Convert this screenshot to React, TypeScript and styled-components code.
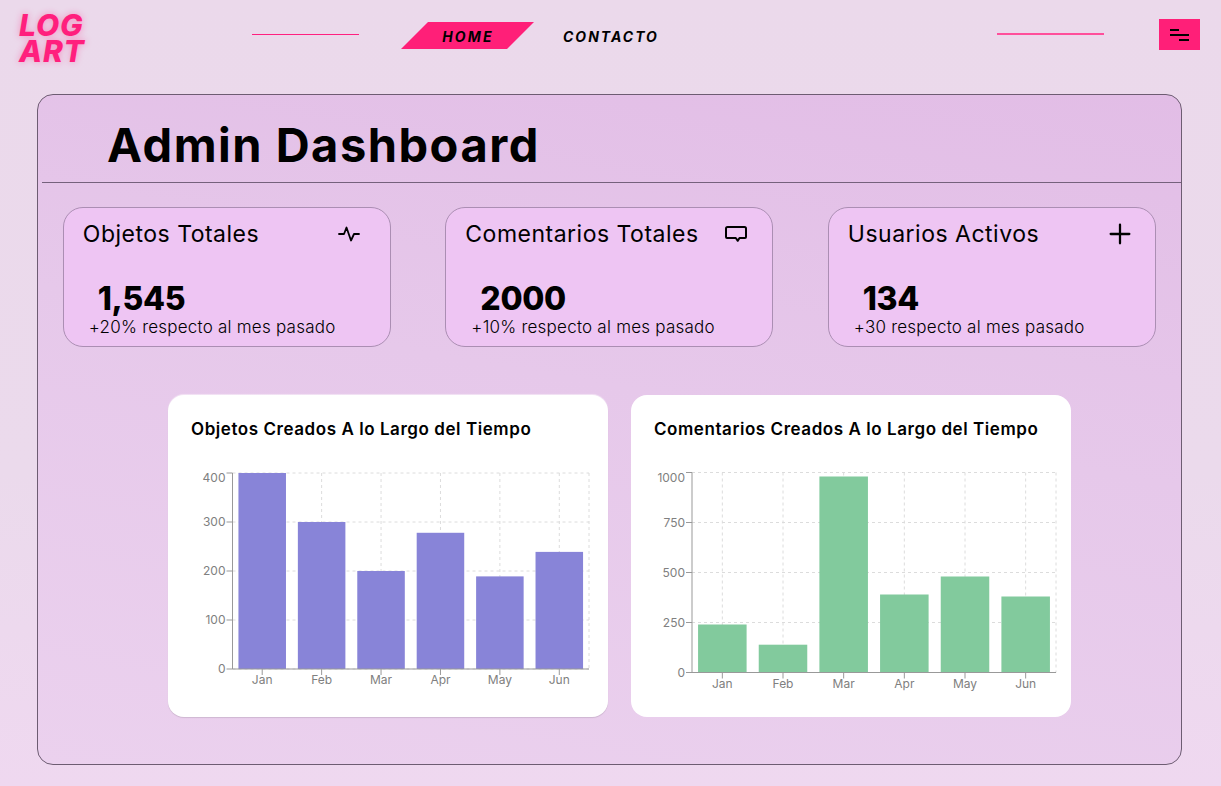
import React from 'react';
import styled, { createGlobalStyle } from 'styled-components';
import { Plus } from 'lucide-react';

const GlobalStyle = createGlobalStyle`
  html, body {
    margin: 0;
    padding: 0;
  }
  body {
    font-family: Inter, "Liberation Sans", sans-serif;
    background: #ebd9eb;
  }
`;

const Page = styled.div`
  width: 1221px;
  height: 786px;
  overflow: hidden;
  background: linear-gradient(180deg, #ebd9eb 0%, #ebdaec 60%, #efd8f0 100%);
`;

const Header = styled.header`
  display: flex;
  align-items: flex-start;
  height: 94px;
  padding-left: 19px;
  box-sizing: border-box;
`;

const Logo = styled.div`
  width: 233px;
  margin-top: 12px;
  font-size: 30px;
  line-height: 26px;
  font-weight: 800;
  font-style: italic;
  letter-spacing: 0.8px;
  color: #ff1f7d;
  text-shadow: 0 0 7px rgba(255, 31, 125, 0.4);
`;

const NavLine = styled.div<{ $width: number; $top: number; $left?: number; $thick?: boolean }>`
  width: ${(p) => p.$width}px;
  height: ${(p) => (p.$thick ? 2 : 1)}px;
  margin-top: ${(p) => p.$top}px;
  margin-left: ${(p) => p.$left ?? 0}px;
  background: ${(p) => (p.$thick ? '#ff4f9b' : '#ff2080')};
`;

const HomeLink = styled.a`
  width: 133px;
  height: 27px;
  margin: 22px 0 0 42px;
  padding: 1px 0 0 1px;
  box-sizing: border-box;
  display: flex;
  align-items: center;
  justify-content: center;
  clip-path: polygon(27px 0, 100% 0, 106px 100%, 0 100%);
  background: #ff1f78;
  color: #000;
  font-size: 14px;
  font-weight: 700;
  font-style: italic;
  letter-spacing: 2.2px;
`;

const ContactLink = styled.a`
  margin: 28px 0 0 29px;
  color: #000;
  font-size: 14px;
  line-height: 17px;
  font-weight: 700;
  font-style: italic;
  letter-spacing: 2px;
`;

const MenuButton = styled.button`
  width: 41px;
  height: 31px;
  margin: 19px 0 0 55px;
  padding: 0;
  border: 0;
  background: #ff1f78;
  display: flex;
  align-items: center;
  justify-content: center;
`;

const Panel = styled.main`
  width: 1145px;
  height: 671px;
  margin-left: 37px;
  box-sizing: border-box;
  border: 1px solid #6d5c72;
  border-radius: 16px;
  background: linear-gradient(190deg, #e2bde6 0%, #e6c8ea 45%, #ebd1ee 100%);
`;

const TitleBar = styled.div`
  height: 88px;
  margin-left: 4px;
  box-sizing: border-box;
  border-bottom: 1px solid #75617c;
  padding: 22px 0 0 65px;
`;

const Title = styled.h1`
  margin: 0;
  font-size: 47px;
  line-height: 56px;
  font-weight: 700;
  letter-spacing: 1.5px;
  color: #000;
`;

const StatsRow = styled.section`
  display: flex;
  gap: 54.5px;
  padding: 24px 0 0 24.8px;
`;

const StatCard = styled.article`
  width: 328px;
  height: 140px;
  box-sizing: border-box;
  border: 1px solid #ab8eb3;
  border-radius: 20px;
  background: #eec5f3;
  padding: 11px 19px 0 19px;
  color: #000;
`;

const StatTop = styled.div`
  display: flex;
  align-items: center;
  justify-content: space-between;
  height: 30px;
`;

const StatLabel = styled.h2`
  margin: 0;
  font-size: 23px;
  line-height: 30px;
  font-weight: 400;
  letter-spacing: 0.5px;
`;

const StatIcon = styled.span<{ $right: number }>`
  display: flex;
  align-items: center;
  justify-content: center;
  width: 22px;
  height: 22px;
  margin-right: ${(p) => p.$right}px;

  svg {
    flex-shrink: 0;
  }
`;

const StatValue = styled.div`
  margin: 31px 0 0 15px;
  font-size: 32px;
  line-height: 38px;
  font-weight: 800;
  letter-spacing: -0.3px;
`;

const StatNote = styled.div`
  margin: -1px 0 0 6px;
  font-size: 17px;
  line-height: 20px;
  font-weight: 300;
  letter-spacing: 0.23px;
`;

const ChartsRow = styled.section`
  display: flex;
  gap: 23px;
  padding: 48px 0 0 130px;
`;

const ChartCard = styled.article<{ $edge?: boolean }>`
  width: 440px;
  height: 322px;
  box-sizing: border-box;
  border-radius: 16px;
  background: #fff;
  padding: 23px 0 0 23px;
  box-shadow: ${(p) => (p.$edge ? '0 1px 1px rgba(0, 0, 0, 0.12), 0 -1px 1px rgba(255, 255, 255, 0.5)' : 'none')};
`;

const ChartTitle = styled.h3`
  margin: 0;
  font-size: 17px;
  line-height: 22px;
  font-weight: 600;
  letter-spacing: 0.56px;
  color: #000;
`;

const ChartSvg = styled.svg`
  display: block;
  margin: 10px 0 0 -23px;
  font-family: Inter, "Liberation Sans", sans-serif;
  font-size: 12px;
  fill: #808080;
`;

type Bar = { month: string; value: number };

type BarChartProps = {
  data: Bar[];
  ticks: number[];
  max: number;
  color: string;
  axisX: number;
  right: number;
  top: number;
  bottom: number;
};

const BarChart = ({ data, ticks, max, color, axisX, right, top, bottom }: BarChartProps) => {
  const band = (right - axisX) / data.length;
  const barWidth = band * 0.8;
  const toY = (value: number) => bottom - (value / max) * (bottom - top);

  return (
    <ChartSvg width={440} height={250} viewBox="0 0 440 250">
      {ticks.map((tick) => (
        <line key={tick} x1={axisX} x2={right} y1={toY(tick)} y2={toY(tick)} stroke="#dcdcdc" strokeDasharray="3 3" />
      ))}
      {data.map((bar, i) => (
        <line
          key={bar.month}
          x1={axisX + band * (i + 0.5)}
          x2={axisX + band * (i + 0.5)}
          y1={top}
          y2={bottom}
          stroke="#dcdcdc"
          strokeDasharray="3 3"
        />
      ))}
      <line x1={right} x2={right} y1={top} y2={bottom} stroke="#dcdcdc" strokeDasharray="3 3" />
      {data.map((bar, i) => (
        <rect
          key={bar.month}
          x={axisX + band * i + (band - barWidth) / 2}
          y={toY(bar.value)}
          width={barWidth}
          height={bottom - toY(bar.value)}
          fill={color}
        />
      ))}
      <line x1={axisX} x2={axisX} y1={top} y2={bottom} stroke="#999" />
      <line x1={axisX} x2={right} y1={bottom} y2={bottom} stroke="#999" />
      {ticks.map((tick) => (
        <g key={tick}>
          <line x1={axisX - 6} x2={axisX} y1={toY(tick)} y2={toY(tick)} stroke="#999" />
          <text x={axisX - 7} y={tick === max ? toY(tick) + 9 : toY(tick) + 4} textAnchor="end">
            {tick}
          </text>
        </g>
      ))}
      {data.map((bar, i) => (
        <g key={bar.month}>
          <line
            x1={axisX + band * (i + 0.5)}
            x2={axisX + band * (i + 0.5)}
            y1={bottom}
            y2={bottom + 6}
            stroke="#999"
          />
          <text x={axisX + band * (i + 0.5)} y={bottom + 15} textAnchor="middle">
            {bar.month}
          </text>
        </g>
      ))}
    </ChartSvg>
  );
};

const MenuIcon = () => (
  <svg width="19" height="14" viewBox="0 0 19 14" fill="none" stroke="#000" strokeWidth="2">
    <path d="M0 2h9M0 7h19M9 12h10" />
  </svg>
);

const PulseIcon = () => (
  <svg width="22" height="16" viewBox="0 0 22 16" fill="none" stroke="#000" strokeWidth="1.8" strokeLinecap="round" strokeLinejoin="round">
    <path d="M1 8h5l2.5-6.5L13 14.5 16 8h5" />
  </svg>
);

const CommentIcon = () => (
  <svg width="22" height="16" viewBox="0 0 22 16" fill="none" stroke="#000" strokeWidth="2" strokeLinejoin="round">
    <path d="M1 2.5A1.5 1.5 0 0 1 2.5 1h17A1.5 1.5 0 0 1 21 2.5v8.5a1 1 0 0 1-1 1h-5.5l-1.7 2.8-2-2.8H2a1 1 0 0 1-1-1z" />
  </svg>
);

const objects: Bar[] = [
  { month: 'Jan', value: 400 },
  { month: 'Feb', value: 300 },
  { month: 'Mar', value: 200 },
  { month: 'Apr', value: 278 },
  { month: 'May', value: 189 },
  { month: 'Jun', value: 239 },
];

const comments: Bar[] = [
  { month: 'Jan', value: 240 },
  { month: 'Feb', value: 139 },
  { month: 'Mar', value: 980 },
  { month: 'Apr', value: 390 },
  { month: 'May', value: 480 },
  { month: 'Jun', value: 380 },
];

const stats = [
  { label: 'Objetos Totales', value: '1,545', note: '+20% respecto al mes pasado', icon: <PulseIcon />, right: 11 },
  { label: 'Comentarios Totales', value: '2000', note: '+10% respecto al mes pasado', icon: <CommentIcon />, right: 6 },
  { label: 'Usuarios Activos', value: '134', note: '+30 respecto al mes pasado', icon: <Plus size={32} strokeWidth={1.7} />, right: 5 },
];

export default function App() {
  return (
    <Page>
      <GlobalStyle />
      <Header>
        <Logo>
          LOG
          <br />
          ART
        </Logo>
        <NavLine $width={107} $top={34} />
        <HomeLink>HOME</HomeLink>
        <ContactLink>CONTACTO</ContactLink>
        <NavLine $width={107} $top={33} $left={338} $thick />
        <MenuButton aria-label="menu">
          <MenuIcon />
        </MenuButton>
      </Header>
      <Panel>
        <TitleBar>
          <Title>Admin Dashboard</Title>
        </TitleBar>
        <StatsRow>
          {stats.map((stat) => (
            <StatCard key={stat.label}>
              <StatTop>
                <StatLabel>{stat.label}</StatLabel>
                <StatIcon $right={stat.right}>{stat.icon}</StatIcon>
              </StatTop>
              <StatValue>{stat.value}</StatValue>
              <StatNote>{stat.note}</StatNote>
            </StatCard>
          ))}
        </StatsRow>
        <ChartsRow>
          <ChartCard $edge>
            <ChartTitle>Objetos Creados A lo Largo del Tiempo</ChartTitle>
            <BarChart data={objects} ticks={[0, 100, 200, 300, 400]} max={400} color="#8884d8" axisX={64.5} right={421} top={23} bottom={219} />
          </ChartCard>
          <ChartCard>
            <ChartTitle>Comentarios Creados A lo Largo del Tiempo</ChartTitle>
            <BarChart data={comments} ticks={[0, 250, 500, 750, 1000]} max={1000} color="#82ca9d" axisX={61} right={425} top={22.5} bottom={222.5} />
          </ChartCard>
        </ChartsRow>
      </Panel>
    </Page>
  );
}
